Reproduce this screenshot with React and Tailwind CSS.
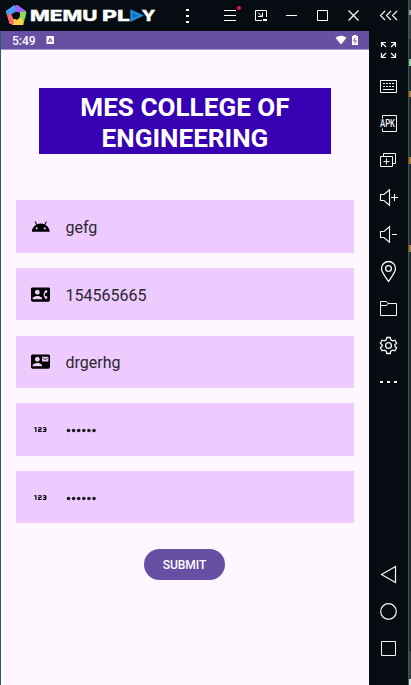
import React from "react";
import { MdContactPhone, MdContactMail, Md123 } from "react-icons/md";

function Logo() {
  return (
    <svg width="156" height="31" viewBox="0 0 156 31" className="shrink-0 overflow-visible">
      <path d="M6 11 L14.5 5 L18.5 11 L12 14 L9 18 Z" fill="#4a86f0" />
      <path d="M15.5 5 L17.5 5 L26 11 L25.5 18 L20 13 L15 11 Z" fill="#9a63f5" />
      <path d="M20 12 L26.500 11.500 L23.500 24 L18 22 L20 15 Z" fill="#86e04c" />
      <path d="M23.500 25 L12 25 L10.500 19 L16 19 L22 18 Z" fill="#ffcf4a" />
      <path d="M6 12 L10.500 12.500 L13 18 L14 24.500 L9.500 24 Z" fill="#f76a6c" />
      <path d="M6 11 L14.500 5 L16 10 L11 14 L7 15 Z" fill="#4d9df5" />
      <path d="M13 13 L18 12 L20 16 L17 20 L13 18 Z" fill="#070c12" />
      <g fill="#fff" stroke="#fff" strokeWidth="0.3" className="font-['Inter'] text-[15px] font-extrabold">
        <text x="30" y="20.7" textLength="67.500" lengthAdjust="spacingAndGlyphs">MEMU</text>
        <text x="102" y="20.7" textLength="28" lengthAdjust="spacingAndGlyphs">PL</text>
        <text x="141.500" y="20.7" textLength="14" lengthAdjust="spacingAndGlyphs">Y</text>
      </g>
      <path d="M131.500 11.200 L141 15.500 L131.500 20 Z" fill="#1467a8" stroke="#1e8fe0" strokeWidth="2.400" />
    </svg>
  );
}

function BarIcon({ children }) {
  return (
    <svg width="31" height="31" viewBox="0 0 31 31" fill="none" stroke="#fff" strokeWidth="1" className="shrink-0">
      {children}
    </svg>
  );
}

function TitleBar() {
  return (
    <header className="flex h-[31px] shrink-0 bg-[#070c12]">
      <Logo />
      <div className="flex w-[58px] shrink-0 flex-col items-center gap-[4px] pt-[9px] pl-[5px]">
        <i className="h-[2px] w-[3px] bg-white" />
        <i className="h-[2px] w-[3px] bg-white" />
        <i className="h-[2px] w-[3px] bg-white" />
      </div>
      <BarIcon>
        <path d="M10 10.500H22M10 15.500H22M10 20.500H22" />
        <circle cx="25" cy="8" r="2" fill="#ff0a5c" stroke="none" />
      </BarIcon>
      <BarIcon>
        <path d="M17 20.500H10.500V10.500H21.500V17M13 12.500L17 16.500M17.500 12.500V16.500H13" />
        <path d="M18 20H22" strokeWidth="2" />
      </BarIcon>
      <BarIcon>
        <path d="M10 15.500H21" />
      </BarIcon>
      <BarIcon>
        <path d="M10.500 10.500H20.500V20.500H10.500Z" />
      </BarIcon>
      <BarIcon>
        <path d="M10.500 10.500L20.500 20.500M20.500 10.500L10.500 20.500" strokeWidth="1.2" />
      </BarIcon>
    </header>
  );
}

function StatusBar() {
  return (
    <div className="flex h-[19px] shrink-0 items-center border-b border-[#a996cc] bg-[#6750a4] pl-[11px] text-white">
      <span className="w-[34px] pt-px font-['Roboto',sans-serif] text-[12px] leading-[18px] font-medium">5:49</span>
      <svg width="8" height="8" viewBox="0 0 8 8">
        <rect x="0.500" width="7.500" height="8" rx="1" fill="#fff" />
        <path d="M2.300 6L4.200 2L6.200 6M3 5H5.500" fill="none" stroke="#6750a4" strokeWidth="1" />
      </svg>
      <svg width="24" height="12" viewBox="0 0 24 12" className="mr-[10px] mb-px ml-auto">
        <path d="M0.500 3.800Q6 -0.400 11.500 3.800L6 10.500Z" fill="#fff" />
        <path d="M17 2H18.500V1H21.500V2H23V11H17Z" fill="#fff" />
        <path d="M20.500 3.500L18.500 6.800H21.500L19.500 9.500" fill="none" stroke="#6750a4" strokeWidth="0.9" />
      </svg>
    </div>
  );
}

function AndroidHead() {
  return (
    <svg width="19.500" height="19.500" viewBox="0 0 24 24" fill="#000">
      <path d="M17.6 9.48l1.84-3.18c.16-.31.04-.69-.26-.85a.637.637 0 0 0-.83.22l-1.88 3.24a11.463 11.463 0 0 0-8.94 0L5.65 5.67a.643.643 0 0 0-.87-.2c-.28.18-.37.54-.22.83L6.4 9.48A10.78 10.78 0 0 0 1 18h22a10.78 10.78 0 0 0-5.4-8.52zM7 15.25a1.25 1.25 0 1 1 0-2.5 1.25 1.25 0 0 1 0 2.5zm10 0a1.25 1.25 0 1 1 0-2.5 1.25 1.25 0 0 1 0 2.5z" />
    </svg>
  );
}

function Field({ icon, children }) {
  return (
    <div className="flex h-[52.4px] items-center bg-[#edcbfe] pl-[15px]">
      <span className="flex w-[34.500px] shrink-0 text-black">
        <span className="flex w-[19.500px] justify-center">{icon}</span>
      </span>
      <span className="pt-[3px] text-[16px] leading-5 text-[#2b2731]">{children}</span>
    </div>
  );
}

function Dots() {
  return (
    <svg width="32" height="5" viewBox="0 0 32 5" fill="#1d1b20" className="block">
      {[0, 1, 2, 3, 4, 5].map((n) => (
        <circle key={n} cx={2.5 + n * 5.1} cy="2.5" r="1.8" />
      ))}
    </svg>
  );
}

function Phone() {
  return (
    <main className="flex flex-1 flex-col bg-[#fef7ff] font-['Roboto',sans-serif]">
      <StatusBar />
      <h1 className="mt-[38px] mr-[38px] ml-[38px] h-[66px] bg-[#3700b3] pt-[4px] text-center text-[26.100px] leading-[30.500px] font-bold text-white">
        MES COLLEGE OF
        <br />
        ENGINEERING
      </h1>
      <div className="mt-[46.200px] mr-[15px] ml-[15px] flex flex-col gap-[15.300px]">
        <Field icon={<AndroidHead />}>gefg</Field>
        <Field icon={<MdContactPhone size={19} />}>154565665</Field>
        <Field icon={<MdContactMail size={19} />}>drgerhg</Field>
        <Field icon={<Md123 size={19} />}><Dots /></Field>
        <Field icon={<Md123 size={19} />}><Dots /></Field>
      </div>
      <button className="mt-[25.500px] mr-px h-[31px] w-[81px] self-center rounded-full bg-[#6750a4] pt-px text-[12px] font-medium text-white">
        SUBMIT
      </button>
    </main>
  );
}

function SideIcon({ children }) {
  return (
    <div className="flex h-[37px] items-center justify-center">
      <svg width="21" height="21" viewBox="0 0 21 21" fill="none" stroke="#f4f6f7" strokeWidth="1" className="overflow-visible">
        {children}
      </svg>
    </div>
  );
}

function Sidebar() {
  return (
    <aside className="flex w-[39px] shrink-0 flex-col bg-[#070c12]">
      <svg width="39" height="31" viewBox="0 0 39 31" fill="none" stroke="#fff" strokeWidth="1.100">
        <path d="M16 11L11.500 15.500L16 20M22 11L17.500 15.500L22 20M28 11L23.500 15.500L28 20" />
      </svg>
      <SideIcon>
        <path d="M3.500 8V3.500H8M3.500 3.500L8 8M13 3.500H17.500V8M17.500 3.500L13 8M3.500 14V18.500H8M3.500 18.500L8 14M13 18.500H17.500V14M17.500 18.500L13 14" strokeWidth="1.2" />
      </SideIcon>
      <SideIcon>
        <path d="M2.500 4.500H18.500V16.500H2.500Z" />
        <path d="M5 7.500H17M5 10.500H17" strokeDasharray="2 1" />
        <path d="M5 13.500H16" />
      </SideIcon>
      <SideIcon>
        <path d="M4.500 5.500V2.500H18.500V18.500H4.500V15.500" />
        <text x="2" y="14" fill="#f4f6f7" stroke="none" textLength="15" lengthAdjust="spacingAndGlyphs" className="font-['Roboto'] text-[10px] font-medium">APK</text>
      </SideIcon>
      <SideIcon>
        <path d="M2.500 6.500H14.500V16.500H2.500ZM5.500 6V3.500H17.500V13.500H15M5.500 11.500H11.500M8.500 8.500V14.500" />
      </SideIcon>
      <SideIcon>
        <path d="M2.500 7.500H6L11.500 2.800V18.200L6 13.500H2.500ZM13 10.500H20M16.500 7V14" strokeWidth="1.100" />
      </SideIcon>
      <SideIcon>
        <path d="M2.500 7.500H6L11.500 2.800V18.200L6 13.500H2.500ZM14 10.500H19" strokeWidth="1.100" />
      </SideIcon>
      <SideIcon>
        <path d="M10.500 20.300C8 16.500 3.500 11.500 3.500 7.500A7 7 0 0 1 17.500 7.500C17.500 11.500 13 16.500 10.500 20.300Z" strokeWidth="1.300" />
        <circle cx="10.500" cy="7.500" r="2.900" strokeWidth="1.300" />
      </SideIcon>
      <SideIcon>
        <path d="M2.500 17.500V3.500H8.500L10 5.500H18.500V17.500ZM2.500 7.500H8.500L10 5.500" />
      </SideIcon>
      <SideIcon>
        <path d="M8.800 2.500H12.200L12.800 4.900L14.600 5.900L16.900 5.200L18.600 8.200L16.900 9.800V11.200L18.600 12.800L16.900 15.800L14.600 15.100L12.800 16.100L12.200 18.500H8.800L8.200 16.100L6.400 15.100L4.100 15.800L2.400 12.800L4.100 11.200V9.800L2.400 8.200L4.100 5.200L6.400 5.900L8.200 4.900Z" strokeWidth="1.300" />
        <circle cx="10.500" cy="10.500" r="2.900" strokeWidth="1.300" />
      </SideIcon>
      <SideIcon>
        <path d="M2 10H5M9 10H12M16 10H19" strokeWidth="2" />
      </SideIcon>
      <div className="mt-auto pb-[18px]">
        <SideIcon>
          <path d="M17.500 2.500V18.500L3.500 10.500Z" strokeWidth="1.200" />
        </SideIcon>
        <SideIcon>
          <circle cx="10.500" cy="10.500" r="7.800" strokeWidth="1.200" />
        </SideIcon>
        <SideIcon>
          <path d="M3.500 3.500H17.500V17.500H3.500Z" />
        </SideIcon>
      </div>
    </aside>
  );
}

function Edge() {
  return (
    <div className="flex w-[3px] shrink-0 flex-col border-l border-[#2d5f58] bg-[#25272a]">
      <i className="h-[10px] bg-[#36383b]" />
      <i className="h-[5px] bg-[#9a9c9e]" />
      <i className="h-[24px] bg-[#3c3f42]" />
      <i className="mt-[20px] h-[7px] bg-[#8cc79b]" />
      <i className="mt-[25px] h-[6px] bg-[#bd7634]" />
      <i className="mt-[60px] h-[7px] bg-[#c7771f]" />
      <i className="mt-[81px] h-[7px] bg-[#b47431]" />
      <i className="mt-auto h-[28px] bg-[#3d3f43]" />
      <i className="h-[6px] bg-[#e2e2e2]" />
    </div>
  );
}

export default function App() {
  return (
    <div className="flex h-[685px] w-[411px] overflow-hidden bg-[#070c12]">
      <div className="flex w-[369px] shrink-0 flex-col border-l border-[#2d5f58]">
        <div className="-ml-px flex flex-col">
          <TitleBar />
        </div>
        <Phone />
      </div>
      <Sidebar />
      <Edge />
    </div>
  );
}
